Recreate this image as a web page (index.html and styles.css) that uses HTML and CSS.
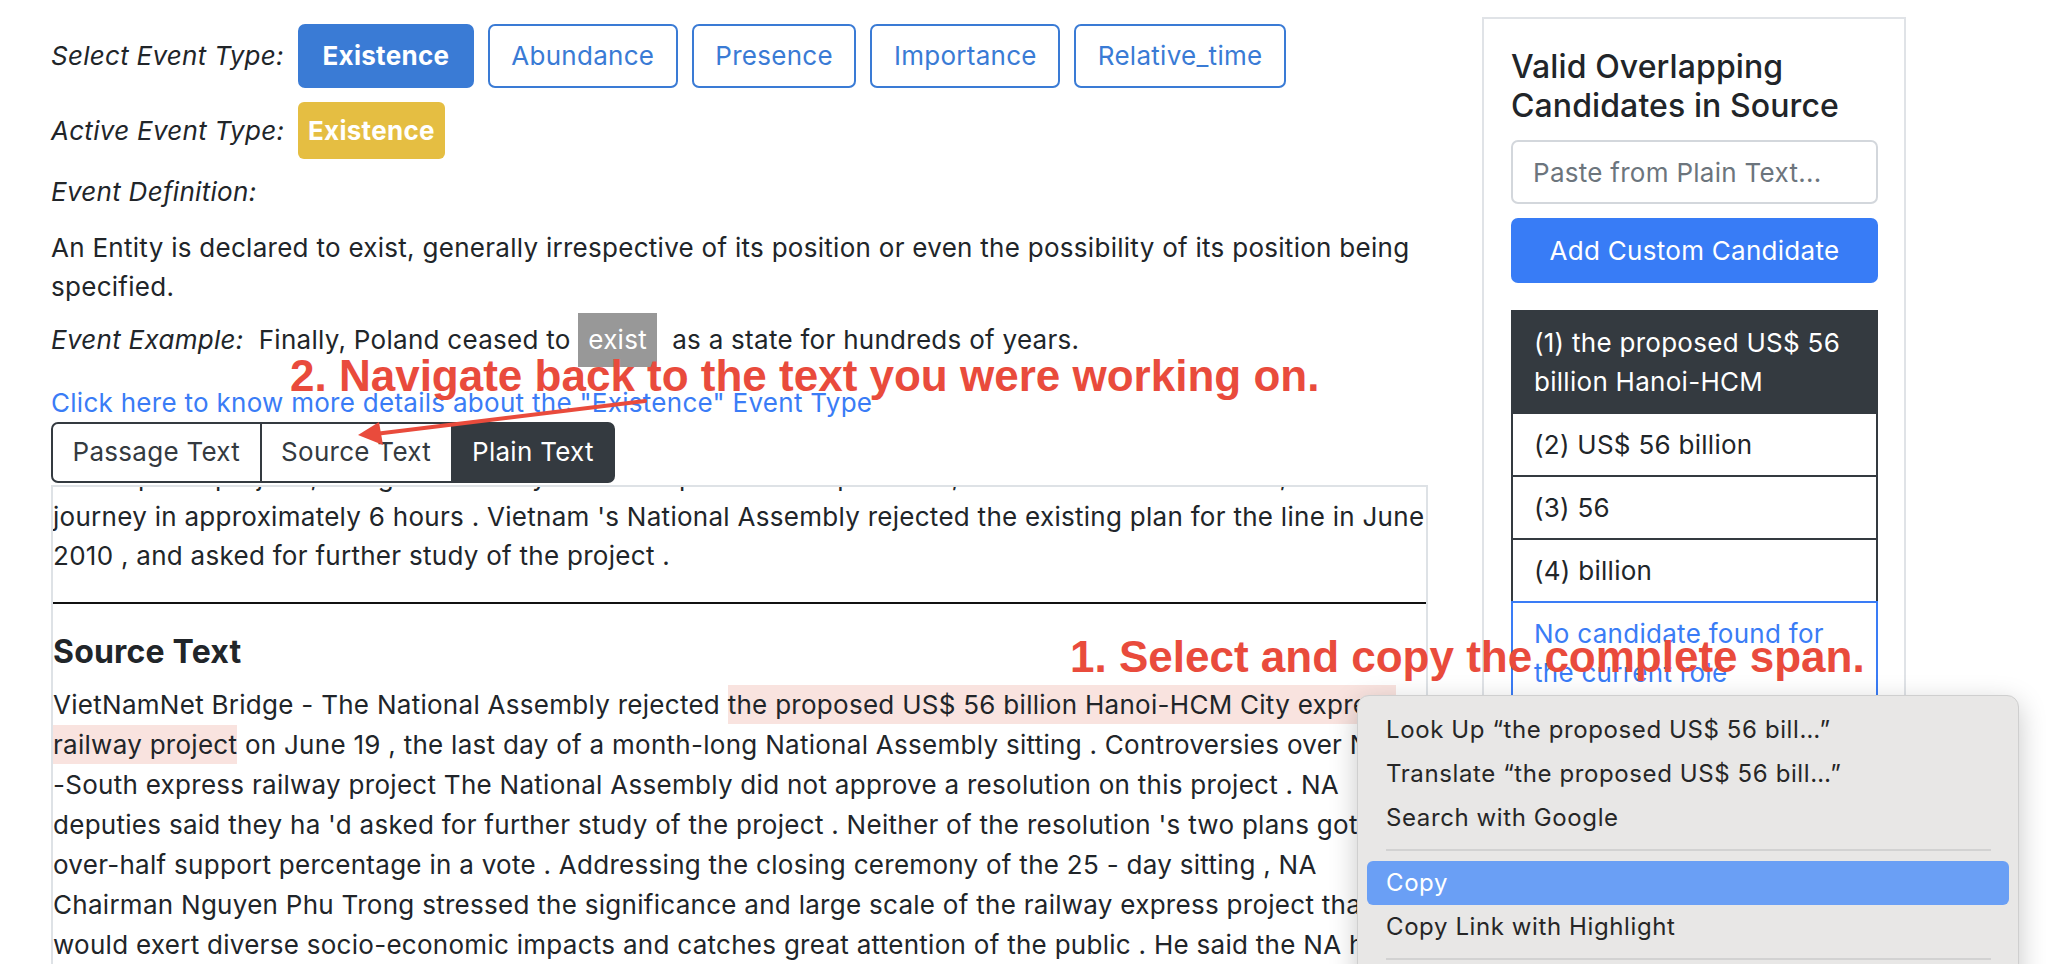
FILE: index.html
```html
<!DOCTYPE html>
<html lang="en">
<head>
<meta charset="utf-8">
<title>Event Annotation</title>
<link rel="stylesheet" href="styles.css">
</head>
<body>
<div class="page">
  <main class="main">
    <div class="row-select">
      <span class="label">Select Event Type:</span>
      <button class="btn btn-primary">Existence</button>
      <button class="btn">Abundance</button>
      <button class="btn">Presence</button>
      <button class="btn">Importance</button>
      <button class="btn">Relative_time</button>
    </div>
    <div class="row-active">
      <span class="label">Active Event Type:</span>
      <span class="badge">Existence</span>
    </div>
    <div class="def-label">Event Definition:</div>
    <p class="definition">An Entity is declared to exist, generally irrespective of its position or even the possibility of its position being<br>specified.</p>
    <div class="example"><i>Event Example:</i>&nbsp; Finally, Poland ceased to <span class="exist">exist</span>&nbsp; as a state for hundreds of years.</div>
    <a class="more-link" href="#">Click here to know more details about the "Existence" Event Type</a>
    <div class="tabs">
      <button class="tab">Passage Text</button>
      <button class="tab">Source Text</button>
      <button class="tab tab-active">Plain Text</button>
    </div>
    <div class="textbox">
      <div class="scroll">
        <p class="passage">The express project , designed to carry trains at up to 300 km per hour , would have allowed the 1,570 km<br>journey in approximately 6 hours . Vietnam 's National Assembly rejected the existing plan for the line in June<br>2010 , and asked for further study of the project .</p>
        <hr class="rule">
        <h5 class="source-title">Source Text</h5>
        <p class="source">VietNamNet Bridge - The National Assembly rejected <span class="hl">the proposed US$ 56 billion Hanoi-HCM City express<br>railway project</span> on June 19 , the last day of a month-long National Assembly sitting . Controversies over North<br>-South express railway project The National Assembly did not approve a resolution on this project . NA<br>deputies said they ha 'd asked for further study of the project . Neither of the resolution 's two plans got<br>over-half support percentage in a vote . Addressing the closing ceremony of the 25 - day sitting , NA<br>Chairman Nguyen Phu Trong stressed the significance and large scale of the railway express project that<br>would exert diverse socio-economic impacts and catches great attention of the public . He said the NA had<br>decided to ask the government to continue studying the project .</p>
      </div>
    </div>
  </main>
  <aside class="card">
    <h5 class="card-title">Valid Overlapping Candidates in Source</h5>
    <input class="input" type="text" placeholder="Paste from Plain Text...">
    <button class="add-btn">Add Custom Candidate</button>
    <div class="cand-list">
      <div class="cand cand-active">(1) the proposed US$ 56 billion Hanoi-HCM</div>
      <div class="cand">(2) US$ 56 billion</div>
      <div class="cand">(3) 56</div>
      <div class="cand">(4) billion</div>
      <div class="cand cand-none">No candidate found for the current role</div>
    </div>
  </aside>
</div>

<div class="note note-2">2. Navigate back to the text you were working on.</div>
<svg class="arrow" width="300" height="60" viewBox="0 0 300 60">
  <line x1="290" y1="13" x2="20" y2="46" stroke="#e94b3c" stroke-width="4" stroke-linecap="round"/>
  <polygon points="3,47 24,34 28,57" fill="#e94b3c"/>
</svg>
<div class="note note-1">1. Select and copy the complete span.</div>

<div class="context-menu">
  <div class="menu-item">Look Up “the proposed US$ 56 bill…”</div>
  <div class="menu-item">Translate “the proposed US$ 56 bill…”</div>
  <div class="menu-item">Search with Google</div>
  <div class="menu-sep"></div>
  <div class="menu-item menu-selected">Copy</div>
  <div class="menu-item">Copy Link with Highlight</div>
  <div class="menu-sep"></div>
</div>
</body>
</html>
```

FILE: styles.css
```css
* { box-sizing: border-box; }

html, body {
  margin: 0;
  height: 100%;
  overflow: hidden;
  background: #fff;
}

body {
  position: relative;
  font-family: Inter, "Helvetica Neue", Arial, sans-serif;
  font-size: 26px;
  line-height: 39.5px;
  letter-spacing: 0.28px;
  color: #212529;
}

.page {
  display: flex;
  align-items: flex-start;
  gap: 54px;
  padding: 17px 0 0 51px;
}

.main {
  flex: none;
  width: 1377px;
  padding-top: 7px;
}

.label {
  flex: none;
  width: 247px;
  font-style: italic;
}

.row-select {
  display: flex;
  align-items: center;
  gap: 14px;
  height: 64px;
  margin-bottom: 14px;
}

.row-select .label { width: 233px; }

.btn {
  font: inherit;
  letter-spacing: inherit;
  line-height: 38px;
  padding: 11px 21.5px;
  border: 2px solid #3a7bd5;
  border-radius: 7px;
  background: #fff;
  color: #3a7bd5;
}

.btn-primary {
  padding: 11px 22.5px;
  background: #3a7bd5;
  color: #fff;
  font-weight: 700;
}

.row-active {
  display: flex;
  align-items: center;
  height: 57px;
  margin-bottom: 13px;
}

.badge {
  background: #e5be42;
  color: #fff;
  font-weight: 700;
  line-height: 39px;
  padding: 9px 10px;
  border-radius: 6px;
}

.def-label {
  font-style: italic;
  margin-bottom: 16px;
}

.definition {
  margin: 0 0 6.5px;
}

.example {
  margin-bottom: 16px;
}

.exist {
  display: inline-block;
  background: #989898;
  color: #fff;
  padding: 7px 10px;
}

.more-link {
  display: block;
  color: #3a7cf6;
  text-decoration: none;
}

.tabs {
  display: flex;
}

.tab {
  font: inherit;
  letter-spacing: inherit;
  line-height: 38.4px;
  padding: 9.3px 19.5px;
  border: 2px solid #343a40;
  background: #fff;
  color: #343a40;
}

.tab + .tab { margin-left: -2px; }
.tab:first-child { border-radius: 7px 0 0 7px; }
.tab:last-child { border-radius: 0 7px 7px 0; }

.tab-active {
  background: #343a40;
  color: #fff;
}

.textbox {
  margin-top: 2px;
  height: 560px;
  border: 2px solid #dee2e6;
  border-bottom: none;
  overflow: hidden;
}

.scroll {
  margin-top: -30px;
}

.passage, .source {
  margin: 0;
  white-space: nowrap;
}

.source { line-height: 40px; }

.rule {
  border: 0;
  border-top: 2px solid #111;
  margin: 26px 0 29px;
}

.source-title {
  font-size: 32px;
  line-height: 38.4px;
  font-weight: 700;
  letter-spacing: 0.2px;
  margin: 0 0 14.5px;
}

.hl {
  background: #f9e3df;
  padding: 4px 0;
}

.card {
  flex: none;
  width: 424px;
  height: 1000px;
  border: 2px solid #e0e3e7;
  padding: 28px 26px 0 27px;
}

.card-title {
  font-size: 32px;
  line-height: 39px;
  font-weight: 500;
  letter-spacing: 0.1px;
  margin: 0 0 15px;
}

.input {
  display: block;
  width: 100%;
  height: 64px;
  border: 2px solid #d3d7dc;
  border-radius: 7px;
  padding: 0 20px;
  font: inherit;
  letter-spacing: inherit;
  color: #212529;
}

.input::placeholder { color: #6c757d; }

.add-btn {
  display: block;
  width: 100%;
  height: 65px;
  margin-top: 14px;
  border: 0;
  border-radius: 7px;
  background: #387cf6;
  color: #fff;
  font: inherit;
  letter-spacing: inherit;
}

.cand-list {
  margin-top: 27px;
}

.cand {
  border: 2px solid #343a40;
  padding: 11px 21px;
  line-height: 39px;
}

.cand + .cand { margin-top: -2px; }

.cand-active {
  background: #343a40;
  color: #fff;
}

.cand-none {
  position: relative;
  border-color: #3a7cf6;
  color: #3a7cf6;
}

.note {
  position: absolute;
  font-family: "Liberation Sans", Arial, sans-serif;
  font-weight: 700;
  font-size: 44px;
  line-height: 44px;
  letter-spacing: 0;
  color: #e94b3c;
  white-space: nowrap;
  z-index: 2;
}

.note-2 { left: 290px; top: 354px; }
.note-1 { left: 1070px; top: 635px; }

.arrow {
  position: absolute;
  left: 355px;
  top: 388px;
  z-index: 2;
}

.context-menu {
  position: absolute;
  left: 1357px;
  top: 695px;
  width: 662px;
  height: 300px;
  padding: 12px 9px;
  background: #e8e7e6;
  border: 1px solid #cfcfcf;
  border-radius: 12px;
  box-shadow: 0 8px 28px rgba(0, 0, 0, 0.22);
  font-size: 24px;
  line-height: 44px;
  letter-spacing: 0.6px;
  color: #262626;
  z-index: 3;
}

.menu-item {
  height: 44px;
  padding-left: 19px;
  white-space: nowrap;
}

.menu-selected {
  background: #6a9ff5;
  color: #fff;
  border-radius: 6px;
}

.menu-sep {
  height: 2px;
  margin: 9px 18px 10px 19px;
  background: #d2d2d2;
}
```
